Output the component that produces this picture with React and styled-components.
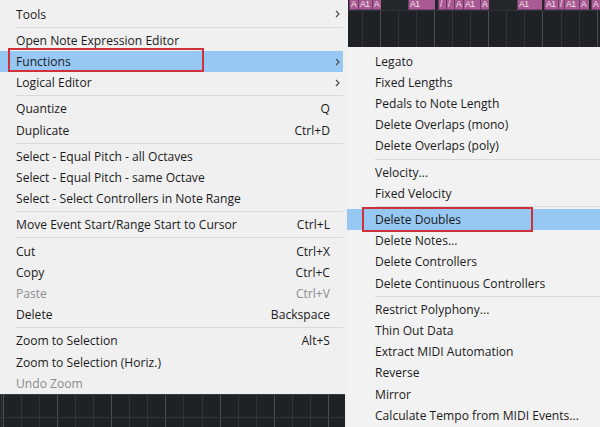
import React from 'react';
import styled, { createGlobalStyle } from 'styled-components';

const GlobalStyle = createGlobalStyle`
  html, body {
    margin: 0;
    padding: 0;
  }
  body {
    background: #1f2226;
    font-family: "Open Sans", "Noto Sans", sans-serif;
  }
`;

const mainItems = [
  { label: 'Tools', arrow: true },
  { sep: true },
  { label: 'Open Note Expression Editor' },
  { label: 'Functions', arrow: true, active: true, marked: true },
  { label: 'Logical Editor', arrow: true },
  { sep: true },
  { label: 'Quantize', shortcut: 'Q' },
  { label: 'Duplicate', shortcut: 'Ctrl+D' },
  { sep: true },
  { label: 'Select - Equal Pitch - all Octaves' },
  { label: 'Select - Equal Pitch - same Octave' },
  { label: 'Select - Select Controllers in Note Range' },
  { sep: true },
  { label: 'Move Event Start/Range Start to Cursor', shortcut: 'Ctrl+L' },
  { sep: true },
  { label: 'Cut', shortcut: 'Ctrl+X' },
  { label: 'Copy', shortcut: 'Ctrl+C' },
  { label: 'Paste', shortcut: 'Ctrl+V', disabled: true },
  { label: 'Delete', shortcut: 'Backspace' },
  { sep: true },
  { label: 'Zoom to Selection', shortcut: 'Alt+S' },
  { label: 'Zoom to Selection (Horiz.)' },
  { label: 'Undo Zoom', disabled: true },
];

const subItems = [
  { label: 'Legato' },
  { label: 'Fixed Lengths' },
  { label: 'Pedals to Note Length' },
  { label: 'Delete Overlaps (mono)' },
  { label: 'Delete Overlaps (poly)' },
  { sep: true },
  { label: 'Velocity...' },
  { label: 'Fixed Velocity' },
  { sep: true },
  { label: 'Delete Doubles', active: true, marked: true },
  { label: 'Delete Notes...' },
  { label: 'Delete Controllers' },
  { label: 'Delete Continuous Controllers' },
  { sep: true },
  { label: 'Restrict Polyphony...' },
  { label: 'Thin Out Data' },
  { label: 'Extract MIDI Automation' },
  { label: 'Reverse' },
  { label: 'Mirror' },
  { label: 'Calculate Tempo from MIDI Events...' },
];

// note blocks in the key editor behind the menus (x relative to the strip)
const notes = [
  { x: 1, w: 9, t: 'A' },
  { x: 10, w: 14, t: 'A1' },
  { x: 24, w: 9, t: 'A' },
  { x: 60, w: 27, t: 'A1' },
  { x: 90, w: 8, t: '/' },
  { x: 98, w: 8, t: '/' },
  { x: 106, w: 9, t: 'A' },
  { x: 115, w: 17, t: 'A1' },
  { x: 132, w: 9, t: 'A' },
  { x: 169, w: 25, t: 'A1' },
  { x: 196, w: 14, t: 'A1' },
  { x: 210, w: 6, t: '/' },
  { x: 216, w: 15, t: 'A1' },
  { x: 231, w: 10, t: 'A' },
  { x: 243, w: 10, t: 'A' },
];

const Page = styled.div`
  width: 600px;
  height: 427px;
  overflow: hidden;
  display: grid;
  grid-template-columns: 347px 253px;
`;

const LeftCol = styled.div`
  display: flex;
  flex-direction: column;
  background: #ececec;
`;

const RightCol = styled.div`
  display: flex;
  flex-direction: column;
  background: #f2f2f2;
  min-width: 0;
`;

const Menu = styled.div`
  background: #f0f0f0;
  padding: 3.6px 4px 0 0;
  display: flex;
  flex-direction: column;
`;

const SubMenu = styled.div`
  flex: 1;
  background: #f2f2f2;
  padding-top: 3.6px;
  display: flex;
  flex-direction: column;
  overflow: hidden;
`;

const Row = styled.div`
  position: relative;
  display: flex;
  align-items: center;
  height: 21.2px;
  flex-shrink: 0;
  padding-left: ${p => p.$indent}px;
  background: ${p => (p.$active ? '#97c8f4' : 'transparent')};
  color: ${p => (p.$disabled ? '#8d8d8d' : '#1b1b1b')};
  font-size: 12.1px;
  white-space: nowrap;
`;

const Label = styled.span`
  flex: 1;
`;

const Shortcut = styled.span`
  margin-right: 1px;
`;

const ArrowCell = styled.span`
  width: 12px;
  display: flex;
  justify-content: center;
  align-items: center;
`;

const Separator = styled.div`
  height: 5px;
  flex-shrink: 0;
  display: flex;
  align-items: center;
  padding-left: ${p => p.$indent}px;

  &::after {
    content: '';
    flex: 1;
    height: 1px;
    background: #d9d9d9;
  }
`;

const Marker = styled.div`
  position: absolute;
  left: ${p => p.$left}px;
  width: ${p => p.$width}px;
  top: ${p => p.$top}px;
  bottom: ${p => p.$bottom}px;
  border: 2px solid #d0303a;
  box-sizing: border-box;
  pointer-events: none;
`;

const gridBg = (fine, bright) => `
  repeating-linear-gradient(
    to right,
    #4b4f54 0 1px,
    transparent 1px ${bright}px
  ),
  repeating-linear-gradient(
    to right,
    #30343a 0 1px,
    transparent 1px ${fine}px
  )
`;

const BottomGrid = styled.div`
  flex: 1;
  margin-right: 2px;
  background-color: #1e2125;
  background-image: linear-gradient(
      to bottom,
      #3a3d42 0 1px,
      transparent 1px 23px,
      #30343a 23px 24px,
      transparent 24px
    ),
    ${gridBg(18.05, 54.15)};
  background-position: 0 0, 3px 0, 3px 0;
`;

const NoteStrip = styled.div`
  position: relative;
  height: 47px;
  flex-shrink: 0;
  margin-left: 1px;
  background-color: #1e2125;
  background-image: ${gridBg(18.05, 54.15)};
  background-position: 32px 0, 14px 0;
  overflow: hidden;
`;

const NoteLane = styled.div`
  position: absolute;
  left: 0;
  right: 0;
  top: 0;
  height: 10px;
  background: #23262a;
  border-bottom: 1px solid #2f3236;
`;

const Note = styled.div`
  position: absolute;
  top: 0;
  height: 10px;
  box-sizing: border-box;
  background: #a95a93;
  border-left: 1px solid #6d3a61;
  border-bottom: 1px solid #7a4270;
  color: #f3e6ef;
  font-family: "Liberation Sans", sans-serif;
  font-size: 8.5px;
  line-height: 9px;
  letter-spacing: -0.3px;
  padding-left: 1px;
  white-space: nowrap;
`;

function Chevron() {
  return (
    <svg width="5" height="8" viewBox="0 0 5 8">
      <path d="M1 1 L4 4 L1 7" fill="none" stroke="#4a4a4a" strokeWidth="1.1" />
    </svg>
  );
}

function MenuList({ items, indent, marker }) {
  return items.map((it, i) =>
    it.sep ? (
      <Separator key={i} $indent={indent} />
    ) : (
      <Row
        key={i}
        $indent={indent}
        $active={it.active}
        $disabled={it.disabled}
      >
        <Label>{it.label}</Label>
        {it.shortcut && <Shortcut>{it.shortcut}</Shortcut>}
        {marker.arrowCell && <ArrowCell>{it.arrow && <Chevron />}</ArrowCell>}
        {it.marked && <Marker {...marker.box} />}
      </Row>
    )
  );
}

export default function App() {
  return (
    <>
      <GlobalStyle />
      <Page>
        <LeftCol>
          <Menu>
            <MenuList
              items={mainItems}
              indent={16}
              marker={{
                arrowCell: true,
                box: { $left: 8, $width: 196, $top: -3, $bottom: 0 },
              }}
            />
          </Menu>
          <BottomGrid />
        </LeftCol>
        <RightCol>
          <NoteStrip>
            <NoteLane />
            {notes.map((n, i) => (
              <Note key={i} style={{ left: n.x, width: n.w }}>
                {n.t}
              </Note>
            ))}
          </NoteStrip>
          <SubMenu>
            <MenuList
              items={subItems}
              indent={28}
              marker={{
                arrowCell: false,
                box: { $left: 15, $width: 171, $top: -2, $bottom: -2 },
              }}
            />
          </SubMenu>
        </RightCol>
      </Page>
    </>
  );
}
